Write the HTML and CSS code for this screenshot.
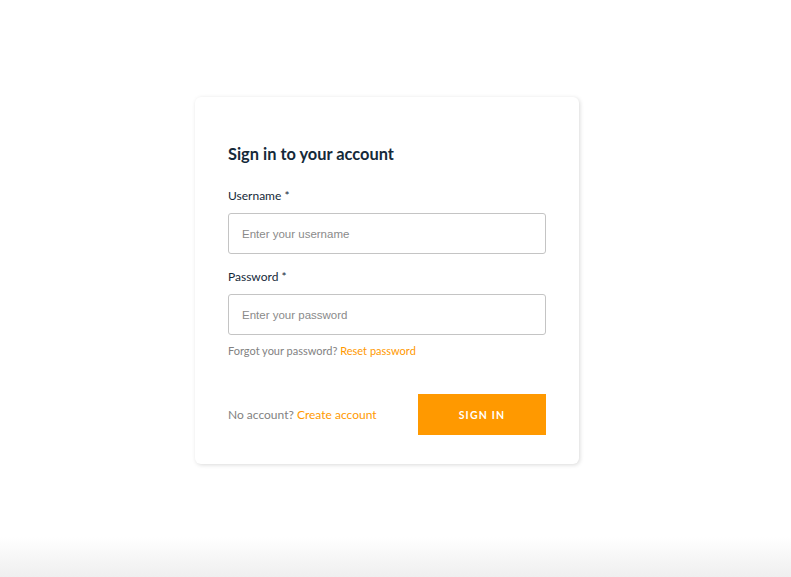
FILE: index.html
```html
<!DOCTYPE html>
<html lang="en">
<head>
<meta charset="utf-8">
<title>Sign in</title>
<link rel="stylesheet" href="styles.css">
</head>
<body>
<div class="page">
  <form class="card">
    <h1 class="title">Sign in to your account</h1>
    <div class="field">
      <label class="label" for="u">Username *</label>
      <input class="input" id="u" type="text" placeholder="Enter your username">
    </div>
    <div class="field">
      <label class="label" for="p">Password *</label>
      <input class="input" id="p" type="password" placeholder="Enter your password">
      <p class="hint">Forgot your password? <a class="link" href="#">Reset password</a></p>
    </div>
    <div class="footer">
      <span class="secondary">No account? <a class="link" href="#">Create account</a></span>
      <button class="btn" type="button">SIGN IN</button>
    </div>
  </form>
</div>
</body>
</html>
```

FILE: styles.css
```css
html, body {
  margin: 0;
  padding: 0;
  height: 100%;
}
body {
  background: linear-gradient(to bottom, #ffffff 0%, #ffffff 93%, #efefef 100%);
  font-family: Lato, "Open Sans", sans-serif;
  color: #152939;
}
.page {
  display: flex;
  justify-content: center;
  padding: 97px 17px 0 0;
}
.card {
  width: 384px;
  box-sizing: border-box;
  padding: 47px 33px 29px;
  background: #fff;
  border-radius: 6px;
  box-shadow: 1px 1px 4px 0 rgba(0, 0, 0, 0.15);
}
.title {
  margin: 0 0 24px;
  font-size: 16.4px;
  font-weight: 700;
  line-height: 20px;
  color: #152939;
}
.field {
  display: flex;
  flex-direction: column;
  margin-bottom: 15px;
}
.label {
  font-size: 12px;
  line-height: 16px;
  margin-bottom: 9px;
  color: #152939;
}
.input {
  height: 41px;
  box-sizing: border-box;
  border: 1px solid #c4c4c4;
  border-radius: 3px;
  padding: 0 13px;
  font-family: "Liberation Sans", Arial, sans-serif;
  font-size: 11.5px;
  color: #152939;
  outline: none;
}
.input::placeholder {
  color: #8a8a8a;
}
.hint {
  margin: 9px 0 0;
  font-size: 11px;
  line-height: 14px;
  color: #828282;
}
.link {
  color: #ff9900;
  text-decoration: none;
}
.footer {
  display: flex;
  align-items: center;
  justify-content: space-between;
  margin-top: 36px;
}
.secondary {
  font-size: 12px;
  color: #828282;
}
.btn {
  width: 128px;
  height: 41px;
  border: none;
  background: #ff9900;
  color: #fff;
  font-family: Lato, "Open Sans", sans-serif;
  font-size: 10.5px;
  font-weight: 700;
  letter-spacing: 1.2px;
  padding: 0;
}
```
